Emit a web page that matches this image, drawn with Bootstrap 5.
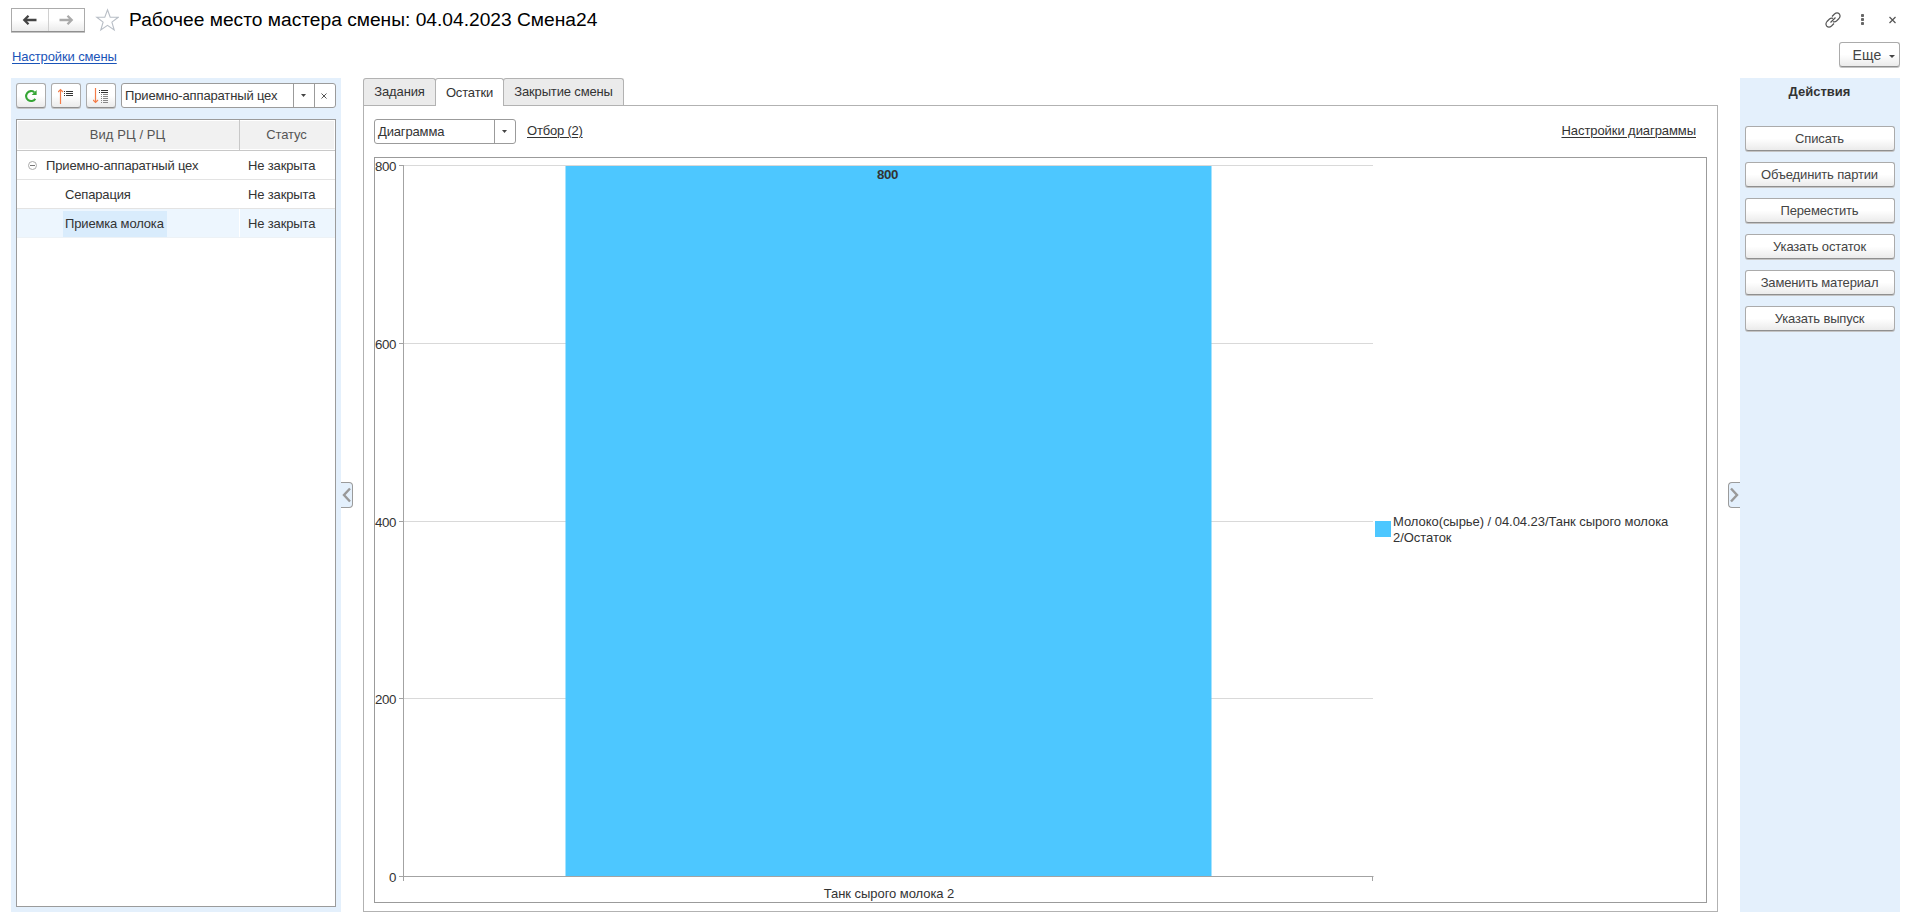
<!DOCTYPE html>
<html lang="ru">
<head>
<meta charset="utf-8">
<title>Рабочее место мастера смены</title>
<link rel="stylesheet" href="https://cdn.jsdelivr.net/npm/bootstrap@5.3.0/dist/css/bootstrap.min.css">
<style>
body{font-family:"Liberation Sans",Arial,sans-serif;font-size:13px;line-height:16px;letter-spacing:-.15px;color:#333;background:#fff;width:1909px;height:921px;overflow:hidden}
svg{display:block;flex:none}
.page-title{font-size:19.2px;line-height:24px;letter-spacing:0;color:#000;margin:0 0 0 10px;font-weight:400;white-space:nowrap}
.head-bar{height:40px;padding:0 9px 0 11px}
.sub-bar{height:38px;padding:0 9px 0 12px}
.btn-face{--bs-btn-padding-x:0;--bs-btn-padding-y:0;--bs-btn-font-size:13px;--bs-btn-line-height:16px;--bs-btn-color:#444;--bs-btn-border-radius:3px;border:1px solid #ababab;border-bottom-color:#8f8f8f;background:linear-gradient(#fff 50%,#ebebeb);box-shadow:0 1px 0 #c4c4c4;display:flex;align-items:center;justify-content:center;height:25px;letter-spacing:-.15px}
.nav-pair{width:74px;height:24px}
.nav-pair>*{flex:1;display:flex;justify-content:center}
.nav-pair>*+*{border-left:1px solid #d0d0d0;height:100%;align-items:center}
.btn-more{width:61px;height:25px;font-size:14px;letter-spacing:.2px}
.cmd{color:#333;text-decoration:underline;text-underline-offset:2px;text-decoration-thickness:1px;letter-spacing:-.07px}
.cmd-blue{color:#1a54b8;letter-spacing:-.12px}
.work{height:834px;padding-left:11px}
.side{background:#e4f0fc}
.side-left{width:330px;padding:5px}
.side-right{width:160px;padding:0 5px}
.side-right .btn-face{padding:1px 1px 0 0}
.tool-btn{width:30px}
.field{border:1px solid #9b9b9b;border-radius:3px;background:#fff;height:25px;display:flex;align-items:stretch;overflow:hidden}
.field>span{display:flex;align-items:center;justify-content:center}
.field .val{flex:1;justify-content:flex-start;padding:1px 0 0 3px;white-space:nowrap}
.field .cell-btn{border-left:1px solid #9b9b9b;width:21px;padding-right:2px}
.tree{border:1px solid #9b9b9b;background:#fff;height:788px;margin-top:11px}
.tree-row{display:grid;grid-template-columns:222px 1fr;height:29px;border-bottom:1px solid #e3e3e3}
.tree-row>div{display:flex;align-items:center;padding-top:1px}
.tree-row>div+div{padding-left:9px}
.tree-head{height:31px;border-bottom-color:#c8c8c8;background:#f1f1f1;color:#555;box-shadow:inset 0 0 0 1px #fff;letter-spacing:.1px}
.tree-head>div{justify-content:center;padding:0 1px 0 0}
.tree-head>div+div{border-left:1px solid #c8c8c8;padding:0 2px 0 0;letter-spacing:-.1px}
.tree-sel{background:#edf6fe;border-bottom-color:#edf2f6}
.tree-sel>div+div{border-left:1px solid #fff;padding-left:8px}
.sel-text{background:#d9ecfc;height:26px;padding:0 3px 0 2px;display:flex;align-items:center}
.gutter{display:flex;align-items:flex-start}
.knob{width:12px;height:26px;margin-top:404px;border:1px solid #9b9b9b;background:#e4f0fc;display:flex;align-items:center;justify-content:center}
.tabs{height:28px;margin-bottom:-1px;position:relative}
.tab-item{height:27px;border:1px solid #b2b2b2;border-bottom:0;border-radius:3px 3px 0 0;background:#ebebeb;display:flex;align-items:center;justify-content:center;margin-right:-1px}
.tab-item.current{background:#fff;height:28px}
.pane{width:1355px;height:807px;border:1px solid #b2b2b2;padding:13px 10px 9px}
.chart{border:1px solid #9b9b9b;margin-top:13px;width:1333px;height:746px}
.chart text{font-family:"Liberation Sans",Arial,sans-serif;font-size:13px;fill:#333;letter-spacing:-.05px}
.chart .axis-num text,.chart .bar-num{letter-spacing:-.4px;font-size:13.3px}
</style>
<script src="https://cdn.jsdelivr.net/npm/bootstrap@5.3.0/dist/js/bootstrap.bundle.min.js"></script>
</head>
<body>
<header class="head-bar d-flex align-items-start">
  <div class="btn-face nav-pair mt-2">
    <span><svg width="16" height="12" viewBox="0 0 16 12"><path d="M14.500 6H3M6.500 1.800L2.300 6L6.500 10.200" fill="none" stroke="#444" stroke-width="2.300"/></svg></span>
    <span><svg width="16" height="12" viewBox="0 0 16 12"><path d="M1.500 6H13M9.500 1.800L13.700 6L9.500 10.200" fill="none" stroke="#aaa" stroke-width="2.300"/></svg></span>
  </div>
  <svg style="margin:8px 0 0 10px" width="24" height="24" viewBox="0 0 24 24"><path d="M12.500 1.800L15.200 9.300H23.200L16.900 14.100L19.200 22L12.500 17.300L5.800 22L8.100 14.100L1.800 9.300H9.800Z" fill="#fff" stroke="#b8bec6" stroke-width="1.100"/></svg>
  <h1 class="page-title mt-2">Рабочее место мастера смены: 04.04.2023 Смена24</h1>
  <div class="ms-auto d-flex align-items-center" style="height:39px">
    <svg width="16" height="16" viewBox="0 0 16 16" fill="none" stroke="#555" stroke-width="1.200"><path d="M7 4.500L9.500 2Q12 0 14.200 1.800Q16 4 14 6.500L11.500 9Q9.800 10.400 8 9.600M9 11.500L6.500 14Q4 16 1.800 14.200Q0 12 2 9.500L4.500 7Q6.200 5.600 8 6.400M5.500 10.500L10.500 5.500"/></svg>
    <svg style="margin-left:14px" width="16" height="16" viewBox="0 0 16 16" fill="#666"><rect x="6" y="2" width="3" height="3" rx=".8"/><rect x="6" y="6" width="3" height="3" rx=".8"/><rect x="6" y="10" width="3" height="3" rx=".8"/></svg>
    <svg style="margin-left:17px" width="12" height="12" viewBox="0 0 12 12"><path d="M1.500 3L7.500 9M7.500 3L1.500 9" stroke="#555" stroke-width="1.200"/></svg>
  </div>
</header>
<div class="sub-bar d-flex align-items-start justify-content-between">
  <a class="cmd cmd-blue" style="margin-top:9px" href="#">Настройки смены</a>
  <button class="btn btn-face btn-more" style="margin-top:2px" type="button"><span class="ms-2">Еще</span><svg style="margin:3px 0 0 7px" width="6" height="3" viewBox="0 0 6 3"><path d="M0 0H6L3 3Z" fill="#444"/></svg></button>
</div>
<main class="work d-flex">
  <aside class="side side-left">
    <div class="d-flex">
      <button class="btn btn-face tool-btn" type="button"><svg width="14" height="14" viewBox="0 0 14 14"><path d="M11.300 9.800A5 5 0 1 1 10.300 3.200" fill="none" stroke="#35a535" stroke-width="2.100"/><path d="M12.600 1V6H7.600Z" fill="#35a535"/></svg></button>
      <button class="btn btn-face tool-btn" style="margin-left:5px" type="button"><svg width="16" height="16" viewBox="0 0 16 16"><path d="M2.500 1.500V16M0 4L2.500 1.500L5 4" fill="none" stroke="#f47c48" stroke-width="1.200"/><path d="M6 3.500H7M8 3.500H15M6 5.500H7M8 5.500H15M6 7.500H7M8 7.500H15" stroke="#333"/></svg></button>
      <button class="btn btn-face tool-btn" style="margin-left:5px" type="button"><svg width="16" height="16" viewBox="0 0 16 16"><path d="M2.500 0V14.500M0 12L2.500 14.500L5 12" fill="none" stroke="#f47c48" stroke-width="1.200"/><path d="M6 2.500H7M8 2.500H15M6 4.500H7M8 4.500H15" stroke="#333"/><path d="M8 6.500H9M10 6.500H15M8 8.500H9M10 8.500H15M8 10.500H9M10 10.500H15M8 12.500H9M10 12.500H15M8 14.500H9M10 14.500H15" stroke="#888"/></svg></button>
      <div class="field" style="margin-left:5px;width:215px"><span class="val">Приемно-аппаратный цех</span><span class="cell-btn"><svg width="5" height="3" viewBox="0 0 5 3"><path d="M0 0H5L2.500 3Z" fill="#444"/></svg></span><span class="cell-btn"><svg width="6" height="6" viewBox="0 0 6 6"><path d="M.5 .5L5.500 5.500M5.500 .5L.5 5.500" stroke="#555"/></svg></span></div>
    </div>
    <div class="tree">
      <div class="tree-row tree-head"><div>Вид РЦ / РЦ</div><div>Статус</div></div>
      <div class="tree-row"><div style="padding-left:11px"><svg width="9" height="9" viewBox="0 0 9 9"><circle cx="4.500" cy="4.500" r="4" fill="#fff" stroke="#aaa"/><path d="M2 4.500H7" stroke="#777"/></svg><span style="margin-left:9px">Приемно-аппаратный цех</span></div><div>Не закрыта</div></div>
      <div class="tree-row"><div style="padding-left:48px">Сепарация</div><div>Не закрыта</div></div>
      <div class="tree-row tree-sel"><div style="padding-left:46px"><span class="sel-text">Приемка молока</span></div><div>Не закрыта</div></div>
    </div>
  </aside>
  <div class="gutter" style="width:22px"><span class="knob border-start-0 rounded-end-1"><svg width="9" height="16" viewBox="0 0 9 16"><path d="M8 1.500L2 8L8 14.500" fill="none" stroke="#999" stroke-width="2.400"/></svg></span></div>
  <section>
    <div class="tabs d-flex">
      <div class="tab-item" style="width:73px">Задания</div>
      <div class="tab-item current" style="width:69px">Остатки</div>
      <div class="tab-item" style="width:121px">Закрытие смены</div>
    </div>
    <div class="pane">
      <div class="d-flex">
        <div class="field" style="width:142px"><span class="val">Диаграмма</span><span class="cell-btn"><svg width="5" height="3" viewBox="0 0 5 3"><path d="M0 0H5L2.500 3Z" fill="#444"/></svg></span></div>
        <a class="cmd" style="margin:4px 0 0 11px;letter-spacing:-.2px" href="#">Отбор (2)</a>
        <a class="cmd ms-auto" style="margin:4px 11px 0 0" href="#">Настройки диаграммы</a>
      </div>
      <div class="chart">
        <svg width="1331" height="744" viewBox="375 158 1331 744">
          <path d="M404 165.500H1373M404 343.500H1373M404 521.500H1373M404 698.500H1373" stroke="#d9d9d9"/>
          <rect x="565.500" y="166" width="646" height="710" fill="#4dc7ff"/>
          <path d="M403.500 165V881M399 165.500H404M399 343.500H404M399 521.500H404M399 698.500H404M399 876.500H1373.500M1372.500 876V881" fill="none" stroke="#a3a3a3"/>
          <g class="axis-num" text-anchor="end"><text x="396" y="171">800</text><text x="396" y="349">600</text><text x="396" y="527">400</text><text x="396" y="704">200</text><text x="396" y="882">0</text></g>
          <text class="bar-num" x="887.500" y="179" text-anchor="middle" font-weight="bold">800</text>
          <text x="889" y="898" text-anchor="middle">Танк сырого молока 2</text>
          <rect x="1375" y="521" width="16" height="16" fill="#4dc7ff"/>
          <text x="1393" y="526">Молоко(сырье) / 04.04.23/Танк сырого молока</text><text x="1393" y="542">2/Остаток</text>
        </svg>
      </div>
    </div>
  </section>
  <div class="gutter justify-content-end" style="width:22px"><span class="knob border-end-0 rounded-start-1"><svg width="9" height="16" viewBox="0 0 9 16"><path d="M1 1.500L7 8L1 14.500" fill="none" stroke="#999" stroke-width="2.400"/></svg></span></div>
  <aside class="side side-right">
    <div class="fw-bold text-center" style="padding:6px 1px 26px 0;letter-spacing:0">Действия</div>
    <div class="d-grid" style="gap:11px">
      <button class="btn btn-face" type="button">Списать</button>
      <button class="btn btn-face" type="button">Объединить партии</button>
      <button class="btn btn-face" type="button">Переместить</button>
      <button class="btn btn-face" type="button">Указать остаток</button>
      <button class="btn btn-face" type="button">Заменить материал</button>
      <button class="btn btn-face" type="button">Указать выпуск</button>
    </div>
  </aside>
</main>
</body>
</html>
